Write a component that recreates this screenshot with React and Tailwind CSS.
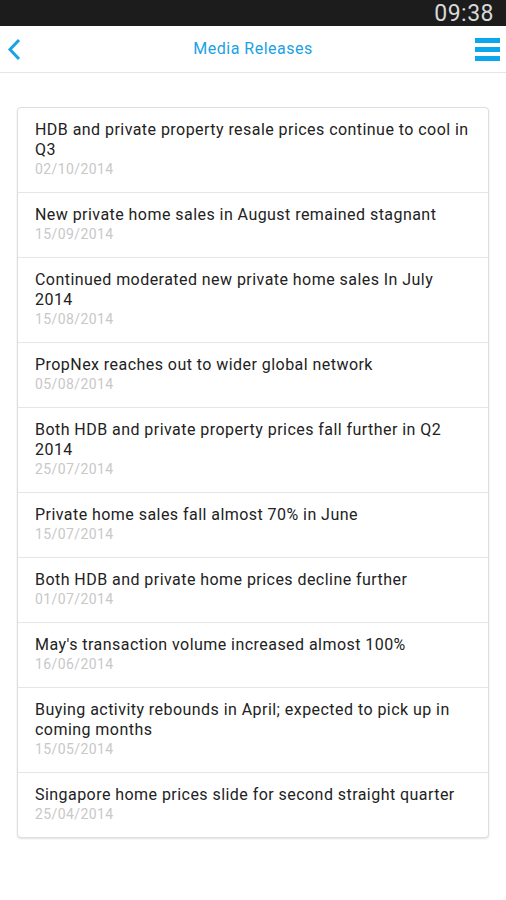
import React from 'react'

const releases = [
  { title: 'HDB and private property resale prices continue to cool in Q3', date: '02/10/2014' },
  { title: 'New private home sales in August remained stagnant', date: '15/09/2014' },
  { title: 'Continued moderated new private home sales In July 2014', date: '15/08/2014' },
  { title: 'PropNex reaches out to wider global network', date: '05/08/2014' },
  { title: 'Both HDB and private property prices fall further in Q2 2014', date: '25/07/2014' },
  { title: 'Private home sales fall almost 70% in June', date: '15/07/2014' },
  { title: 'Both HDB and private home prices decline further', date: '01/07/2014' },
  { title: "May's transaction volume increased almost 100%", date: '16/06/2014' },
  { title: 'Buying activity rebounds in April; expected to pick up in coming months', date: '15/05/2014' },
  { title: 'Singapore home prices slide for second straight quarter', date: '25/04/2014' },
]

const App = () => {
  return (
    <div className="w-[506px] min-h-[900px] bg-white font-['Roboto','Liberation_Sans',sans-serif]">
      {/* Status bar */}
      <div className="h-[26px] bg-[#1c1c1c] flex items-center justify-end pr-[12px]">
        <span className="text-[23px] leading-none text-[#d8d8d8] tracking-[0.5px]">09:38</span>
      </div>

      {/* Header */}
      <div className="h-[47px] flex items-center justify-between border-b border-[#e6e6e6] relative">
        <button className="w-[40px] h-full flex items-center pl-[7px]">
          <svg width="16" height="23" viewBox="0 0 16 23">
            <path d="M12 2 L3 11.5 L12 21" fill="none" stroke="#1aa1e6" strokeWidth="3" />
          </svg>
        </button>
        <h1 className="text-[16px] tracking-[0.5px] text-[#1aa1e6] absolute left-0 right-0 text-center pointer-events-none">
          Media Releases
        </h1>
        <button className="h-full flex flex-col justify-center gap-[4px] pr-[6px]">
          <span className="block w-[25px] h-[5px] bg-[#0aa6ee]"></span>
          <span className="block w-[25px] h-[5px] bg-[#0aa6ee]"></span>
          <span className="block w-[25px] h-[5px] bg-[#0aa6ee]"></span>
        </button>
      </div>

      {/* List */}
      <div className="px-[17px] pt-[34px]">
        <div className="bg-white border border-[#dedede] rounded-[4px] shadow-[0_1px_2px_rgba(0,0,0,0.12)]">
          {releases.map((item, i) => (
            <div
              key={i}
              className={`pl-[17px] pr-[14px] pt-[12px] pb-[13px] ${i < releases.length - 1 ? 'border-b border-[#e6e6e6]' : ''}`}
            >
              <p className="text-[16px] leading-[20px] tracking-[0.45px] text-[#222222]">{item.title}</p>
              <p className="text-[14px] leading-[19px] tracking-[0.4px] text-[#c8c8c8]">{item.date}</p>
            </div>
          ))}
        </div>
      </div>
    </div>
  )
}

export default App
